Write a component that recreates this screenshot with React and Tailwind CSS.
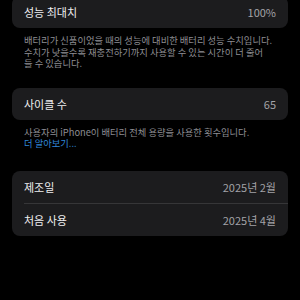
import React from 'react';

const font = { fontFamily: '"Noto Sans CJK KR", "Noto Sans", sans-serif' };

const Row = ({ label, value }) => (
  <div className="flex h-[32px] items-center justify-between pr-[12px]">
    <span className="text-[11px] text-[#eeeef0]">{label}</span>
    <span className="text-[11px] text-[#a3a3a8]">{value}</span>
  </div>
);

const Card = ({ children, className = '' }) => (
  <div className={`mx-[12px] rounded-[8px] bg-[#1c1c1e] pl-[12px] ${className}`}>{children}</div>
);

export default function App() {
  return (
    <div className="h-[300px] w-[300px] overflow-hidden bg-black" style={font}>
      <div className="-mt-[4px]">
        <Card>
          <Row label="성능 최대치" value="100%" />
        </Card>
        <p className="mt-[7px] px-[24px] text-[9.3px] leading-[11.6px] text-[#8e8e93]">
          배터리가 신품이었을 때의 성능에 대비한 배터리 성능 수치입니다.
          <br />
          수치가 낮을수록 재충전하기까지 사용할 수 있는 시간이 더 줄어
          <br />
          들 수 있습니다.
        </p>

        <Card className="mt-[18px]">
          <Row label="사이클 수" value="65" />
        </Card>
        <p className="mt-[7px] px-[24px] text-[9.3px] leading-[11.6px] text-[#8e8e93]">
          사용자의 iPhone이 배터리 전체 용량을 사용한 횟수입니다.
          <br />
          <span className="text-[#2f86d8]">더 알아보기...</span>
        </p>

        <Card className="mt-[21px]">
          <Row label="제조일" value="2025년 2월" />
          <div className="h-px bg-[#363638]" />
          <Row label="처음 사용" value="2025년 4월" />
        </Card>
      </div>
    </div>
  );
}
